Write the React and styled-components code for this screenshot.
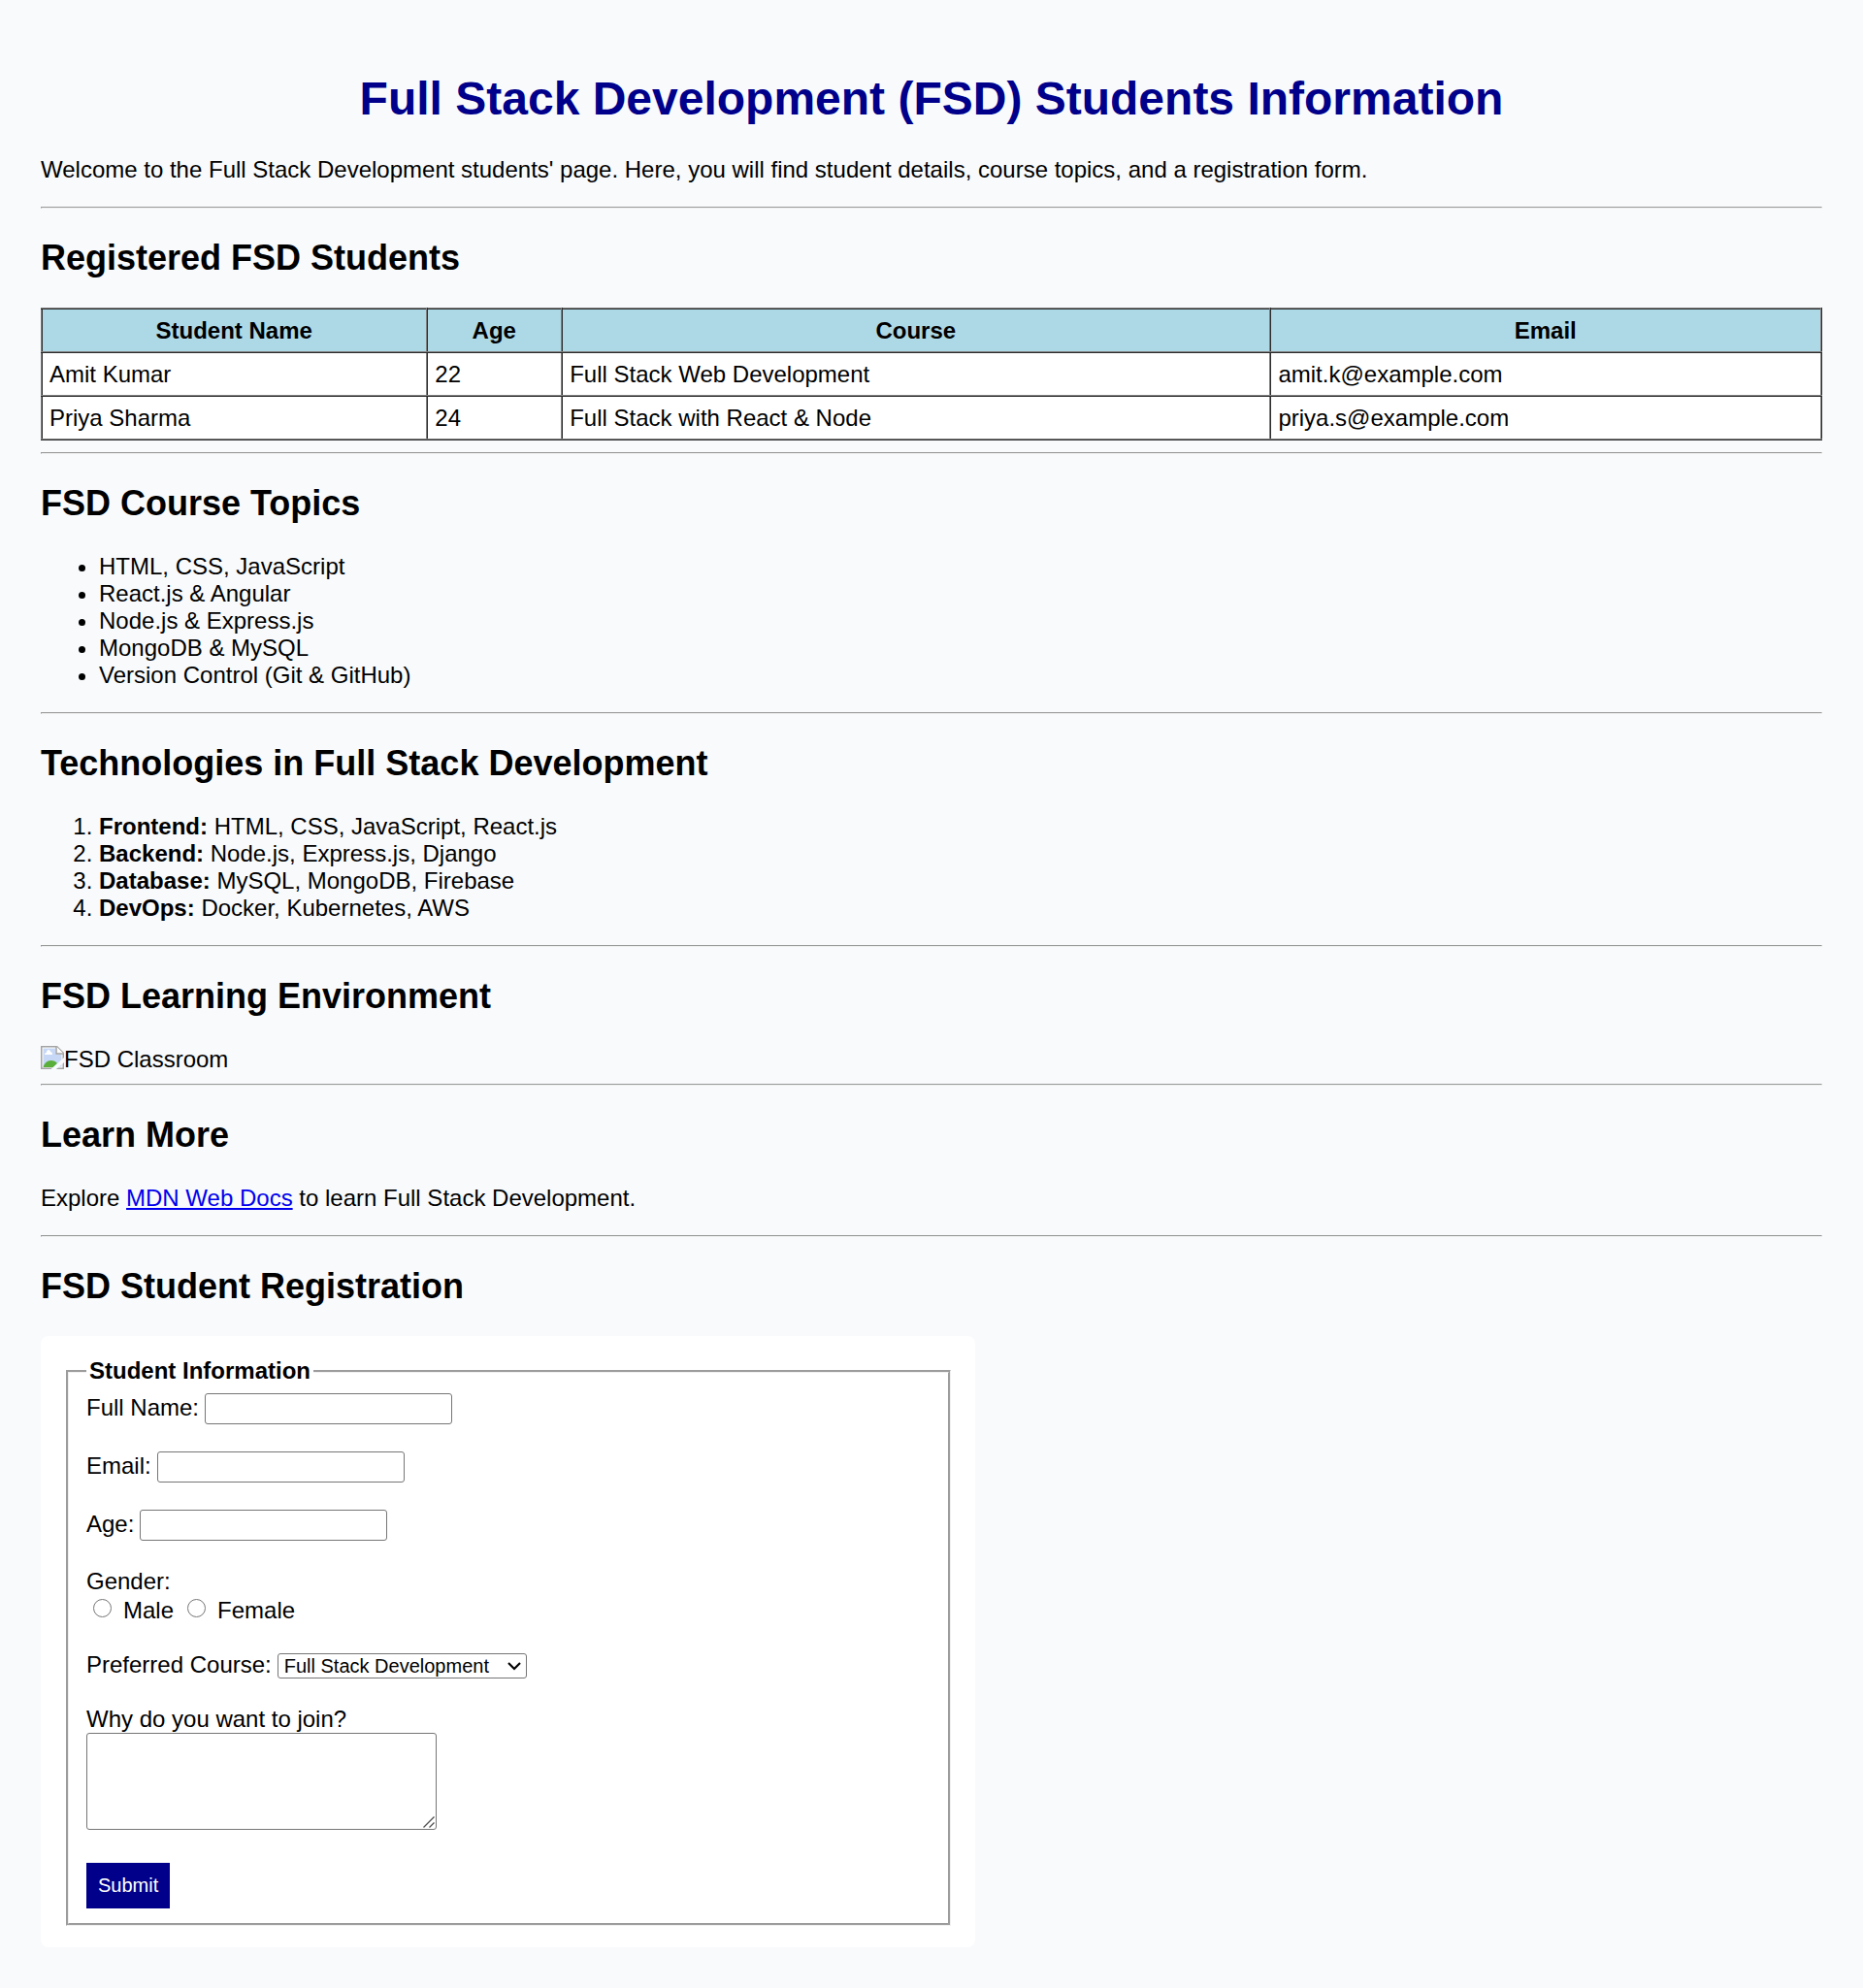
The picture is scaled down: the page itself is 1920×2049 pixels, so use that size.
import React from "react";
import styled, { createGlobalStyle } from "styled-components";

const GlobalStyle = createGlobalStyle`
  body {
    margin: 0;
    background: #f8fafc;
    color: #000;
    font: 24px/28px "Liberation Sans", Arial, sans-serif;
  }
`;

const Page = styled.main`
  padding: 42px;
`;

const Title = styled.h1`
  margin: 32px 0;
  font-size: 48px;
  line-height: 55px;
  text-align: center;
  color: darkblue;
`;

const Divider = styled.hr`
  margin: ${(p) => (p.$tight ? "12px" : "24px")} 0 0;
  border: 1px solid;
  border-color: #9a9a9a #eee #eee #9a9a9a;
`;

const Heading = styled.h2`
  margin: 30px 0;
  font-size: 36px;
  line-height: 42px;
`;

const Text = styled.p`
  margin: 0;
`;

const Table = styled.table`
  width: 100%;
  border-collapse: collapse;
  background: #fff;

  th,
  td {
    border: 2px ridge #808080;
    padding: 8px 8px 7px 7px;
  }

  th {
    background: lightblue;
  }
`;

const listStyle = `
  margin: 0;
  padding: 0 0 0 60px;
`;
const BulletList = styled.ul`${listStyle}`;
const NumberList = styled.ol`${listStyle}`;

const Picture = styled.div`
  display: flex;
  align-items: flex-start;
  height: 27px;

  svg {
    flex: none;
  }
`;

const Link = styled.a`
  color: #0000ee;
`;

const Form = styled.form`
  width: 50%;
  padding: 22px 22px 22px 23px;
  border-radius: 8px;
  background: #fff;
`;

const Fieldset = styled.fieldset`
  margin: 0 3px;
  padding: 9px 18px 15px;
  border: 3px groove #f0f0f0;
`;

const Legend = styled.legend`
  padding: 0 3px;
  font-weight: bold;
`;

const Fields = styled.div`
  display: grid;
  gap: 28px;
`;

const Field = styled.div`
  display: flex;
  align-items: ${(p) => p.$align || "baseline"};
  gap: 6px;
`;

const control = `
  box-sizing: border-box;
  margin: 0;
  border: 1px solid #767676;
  border-radius: 3px;
  background: #fff;
  color: #000;
  font: 20px/23px "Liberation Sans", Arial, sans-serif;
`;

const Input = styled.input`
  ${control}
  width: 255px;
  height: 32px;
  padding: 2px 3px;
`;

const RadioRow = styled.div`
  display: flex;
  gap: 7px;
  padding-top: 2px;
`;

const Option = styled.div`
  display: flex;
`;

const Radio = styled.input`
  width: 19px;
  height: 19px;
  margin: 2px 12px 0 7px;
`;

const SelectBox = styled.div`
  position: relative;
  height: 26px;

  svg {
    position: absolute;
    right: 6px;
    top: 9px;
    pointer-events: none;
  }
`;

const Select = styled.select`
  ${control}
  appearance: none;
  display: block;
  width: 257px;
  height: 26px;
  padding: 0 6px;
`;

const TextAreaBox = styled.div`
  position: relative;
  width: fit-content;
  margin-bottom: 6px;

  svg {
    position: absolute;
    right: 2px;
    bottom: 2px;
    pointer-events: none;
  }
`;

const TextArea = styled.textarea`
  ${control}
  display: block;
  width: 361px;
  height: 100px;
  padding: 3px;

  &::-webkit-resizer {
    background: transparent;
  }
`;

const Submit = styled.button`
  justify-self: start;
  height: 47px;
  padding: 0 12px;
  border: 0;
  background: darkblue;
  color: #fff;
  font: 20px/23px "Liberation Sans", Arial, sans-serif;
`;

const BrokenImage = () => (
  <svg width="24" height="24" viewBox="0 0 24 24" aria-hidden="true">
    <path d="M0 0h17l7 7v17H0z" fill="#a3a3a3" />
    <path d="M1.5 1.5h15l6 6v15h-21z" fill="#fff" />
    <path d="M2.5 2.5H15v6h6.500v13h-19z" fill="#c6d8f6" />
    <path d="M4 9c0-1.500 1-2 2-2 0-2 1-3 2-3s2 1 2 2c1 0 2 1 2 3z" fill="#fff" />
    <path d="M2.500 22c1-4 4-7 8-7 3 0 5 1 6.500 3l-4 4z" fill="#5aae3a" />
    <path d="M16 .5V8h7.500" fill="#fff" stroke="#a3a3a3" strokeWidth="1.5" />
    <path d="M24 12L10.500 24H16l8-7z" fill="#f8fafc" />
  </svg>
);

const Chevron = () => (
  <svg width="14" height="9" viewBox="0 0 14 9" aria-hidden="true">
    <path d="M1 1l6 6 6-6" fill="none" stroke="#000" strokeWidth="2.2" />
  </svg>
);

const Grip = () => (
  <svg width="12" height="12" viewBox="0 0 12 12" aria-hidden="true">
    <path d="M.5 11.500l11-11M6.500 11.500l5-5" stroke="#555" strokeWidth="1.4" />
  </svg>
);

const students = [
  ["Amit Kumar", "22", "Full Stack Web Development", "amit.k@example.com"],
  ["Priya Sharma", "24", "Full Stack with React & Node", "priya.s@example.com"],
];

const topics = [
  "HTML, CSS, JavaScript",
  "React.js & Angular",
  "Node.js & Express.js",
  "MongoDB & MySQL",
  "Version Control (Git & GitHub)",
];

const technologies = [
  ["Frontend:", "HTML, CSS, JavaScript, React.js"],
  ["Backend:", "Node.js, Express.js, Django"],
  ["Database:", "MySQL, MongoDB, Firebase"],
  ["DevOps:", "Docker, Kubernetes, AWS"],
];

export default function App() {
  return (
    <Page>
      <GlobalStyle />
      <Title>Full Stack Development (FSD) Students Information</Title>
      <Text>
        Welcome to the Full Stack Development students' page. Here, you will find student details,
        course topics, and a registration form.
      </Text>

      <Divider />
      <section>
        <Heading>Registered FSD Students</Heading>
        <Table>
          <thead>
            <tr>
              {["Student Name", "Age", "Course", "Email"].map((h) => (
                <th key={h} scope="col">{h}</th>
              ))}
            </tr>
          </thead>
          <tbody>
            {students.map((row) => (
              <tr key={row[0]}>
                {row.map((cell) => (
                  <td key={cell}>{cell}</td>
                ))}
              </tr>
            ))}
          </tbody>
        </Table>
      </section>

      <Divider $tight />
      <section>
        <Heading>FSD Course Topics</Heading>
        <BulletList>
          {topics.map((t) => (
            <li key={t}>{t}</li>
          ))}
        </BulletList>
      </section>

      <Divider />
      <section>
        <Heading>Technologies in Full Stack Development</Heading>
        <NumberList>
          {technologies.map(([name, items]) => (
            <li key={name}>
              <strong>{name}</strong> {items}
            </li>
          ))}
        </NumberList>
      </section>

      <Divider />
      <section>
        <Heading>FSD Learning Environment</Heading>
        <Picture>
          <BrokenImage />
          <span>FSD Classroom</span>
        </Picture>
      </section>

      <Divider $tight />
      <section>
        <Heading>Learn More</Heading>
        <Text>
          Explore <Link href="https://developer.mozilla.org/">MDN Web Docs</Link> to learn Full
          Stack Development.
        </Text>
      </section>

      <Divider />
      <section>
        <Heading>FSD Student Registration</Heading>
        <Form onSubmit={(e) => e.preventDefault()}>
          <Fieldset>
            <Legend>Student Information</Legend>
            <Fields>
              <Field>
                <label htmlFor="name">Full Name:</label>
                <Input id="name" type="text" />
              </Field>
              <Field>
                <label htmlFor="email">Email:</label>
                <Input id="email" type="email" />
              </Field>
              <Field>
                <label htmlFor="age">Age:</label>
                <Input id="age" type="number" />
              </Field>
              <div role="radiogroup" aria-labelledby="gender">
                <div id="gender">Gender:</div>
                <RadioRow>
                  <Option>
                    <Radio type="radio" id="male" name="gender" />
                    <label htmlFor="male">Male</label>
                  </Option>
                  <Option>
                    <Radio type="radio" id="female" name="gender" />
                    <label htmlFor="female">Female</label>
                  </Option>
                </RadioRow>
              </div>
              <Field $align="flex-end">
                <label htmlFor="course">Preferred Course:</label>
                <SelectBox>
                  <Select id="course">
                    <option>Full Stack Development</option>
                    <option>Frontend Development</option>
                    <option>Backend Development</option>
                  </Select>
                  <Chevron />
                </SelectBox>
              </Field>
              <div>
                <label htmlFor="reason">Why do you want to join?</label>
                <TextAreaBox>
                  <TextArea id="reason" />
                  <Grip />
                </TextAreaBox>
              </div>
              <Submit type="submit">Submit</Submit>
            </Fields>
          </Fieldset>
        </Form>
      </section>
    </Page>
  );
}
